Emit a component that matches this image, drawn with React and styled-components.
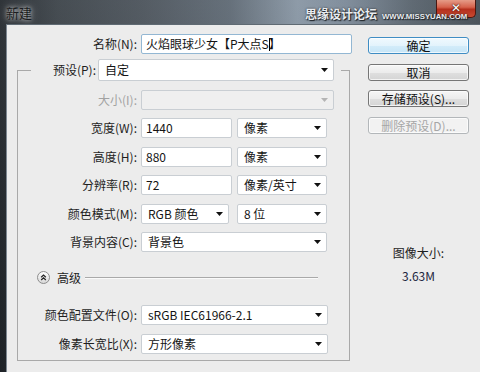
import React from 'react';
import styled, { createGlobalStyle } from 'styled-components';

const FONT = `"Noto Sans CJK SC", "Noto Sans", "Liberation Sans", sans-serif`;

const Global = createGlobalStyle`
  html, body { margin: 0; padding: 0; background: #2a3036; }
  body { width: 480px; height: 372px; overflow: hidden; font-family: ${FONT}; }
  * { box-sizing: border-box; }
`;

const Window = styled.div`
  position: relative;
  width: 480px;
  height: 372px;
  display: flex;
  flex-direction: column;
  background:
    linear-gradient(180deg, rgba(255,255,255,0.06) 0%, rgba(0,0,0,0.15) 100%),
    linear-gradient(90deg, #23282d 0%, #3b4248 12%, #4a525a 30%, #5d6873 48%, #8795a3 62%, #7a8897 72%, #56616b 86%, #414a52 100%);
`;

const TitleBar = styled.div`
  height: 24px;
  flex: 0 0 24px;
  display: flex;
  align-items: flex-start;
  padding: 0 4px 0 6px;
`;

const Title = styled.span`
  margin-top: 5px;
  font-size: 13px;
  line-height: 16px;
  color: #1b1d20;
  text-shadow: 0 0 4px rgba(255,255,255,0.75), 0 0 8px rgba(255,255,255,0.5);
`;

const CloseBtn = styled.span`
  margin-left: auto;
  display: block;
  min-width: 40px;
  width: 40px;
  min-height: 18px;
  height: 18px;
  background-color: #c44530;
  background-image: linear-gradient(180deg, #e59c88 0%, #d6624c 42%, #b5301d 55%, #c84a32 100%);
  border: 1px solid #4a1710;
  border-top-width: 0;
  border-radius: 0 0 5px 5px;
  color: #ffffff;
  font-family: "DejaVu Sans", sans-serif;
  font-size: 12px;
  font-weight: 700;
  line-height: 17px;
  text-align: center;
  text-shadow: 0 0 2px #3a130d, 0 0 1px #3a130d;
`;

const Watermark = styled.div`
  position: absolute;
  left: 305px;
  top: 6px;
  display: flex;
  align-items: baseline;
  gap: 5px;
  color: #e9ecef;
  text-shadow: 0 0 2px #1d2227, 1px 1px 1px #1d2227;
  white-space: nowrap;
`;

const WatermarkCn = styled.span`
  font-size: 12px;
  line-height: 16px;
  font-weight: 700;
`;

const WatermarkUrl = styled.span`
  font-family: "Liberation Sans", Arial, sans-serif;
  font-size: 7.8px;
  font-weight: 700;
`;

const Frame = styled.div`
  flex: 1;
  display: flex;
  padding-left: 6px;
`;

const Body = styled.div`
  flex: 1;
  display: flex;
  background: #ececec;
  border-top: 1px solid #5f6a73;
  border-left: 1px solid #7d8791;
`;

const LeftPanel = styled.div`
  width: 348px;
  padding-top: 9px;
  display: flex;
  flex-direction: column;
`;

const Row = styled.div`
  display: grid;
  grid-template-columns: ${p => p.$labelW}px auto;
  column-gap: 4px;
  align-items: center;
  height: 20px;
  margin-top: ${p => p.$mt ?? 0}px;
`;

const Label = styled.span`
  text-align: right;
  font-size: 12px;
  line-height: 16px;
  color: ${p => (p.$disabled ? '#a2a2a2' : '#1e1e1e')};
  white-space: nowrap;
`;

const Fields = styled.div`
  display: flex;
  gap: ${p => p.$gap ?? 5}px;
  align-items: center;
`;

const Box = styled.div`
  position: relative;
  width: ${p => p.$w}px;
  height: ${p => p.$h ?? 20}px;
  display: flex;
  align-items: center;
  padding-left: ${p => p.$pad ?? 5}px;
  background: ${p => (p.$disabled ? '#efefef' : '#ffffff')};
  border: 1px solid ${p => (p.$focus ? '#93b7d3' : '#c9ced3')};
  border-radius: 2px;
  font-size: 12px;
  line-height: 16px;
  color: #141414;
  white-space: nowrap;
  overflow: hidden;
`;

const ArrowWrap = styled.span`
  position: absolute;
  right: 5px;
  top: 50%;
  margin-top: -2px;
  display: flex;
`;

const Caret = styled.span`
  display: inline-block;
  width: 1px;
  height: 13px;
  background: #000;
  margin: 0 -1px 0 0;
`;

const Arrow = ({ disabled }) => (
  <ArrowWrap>
    <svg width="7" height="4" viewBox="0 0 7 4">
      <path d="M0 0H7L3.5 4Z" fill={disabled ? '#b4b4b4' : '#111'} />
    </svg>
  </ArrowWrap>
);

const Select = ({ w, h, children, disabled }) => (
  <Box $w={w} $h={h} $disabled={disabled} $pad={6}>
    {children}
    <Arrow disabled={disabled} />
  </Box>
);

const Group = styled.fieldset`
  margin: 5px 0 0 10px;
  width: 333px;
  padding: 0 0 6px 0;
  border: 1px solid #a9a9a9;
  display: flex;
  flex-direction: column;
  min-width: 0;
`;

const Legend = styled.legend`
  margin-left: 13px;
  padding: 0 7px 0 0;
  display: grid;
  grid-template-columns: 65px auto;
  column-gap: 2px;
  align-items: center;
`;

const Rows = styled.div`
  padding-top: 9px;
  display: grid;
  row-gap: 8.4px;
`;

const AdvancedRow = styled.div`
  margin-top: 19px;
  height: 14px;
  display: flex;
  align-items: center;
  padding-left: 19px;
`;

const AdvancedText = styled.span`
  margin-left: 7px;
  font-size: 12px;
  line-height: 16px;
  color: #1e1e1e;
`;

const Rule = styled.div`
  flex: 1;
  margin: 0 31px 0 4px;
  height: 2px;
  border-top: 1px solid #a9a9a9;
  border-bottom: 1px solid #fafafa;
`;

const RightPanel = styled.div`
  margin-left: 13px;
  width: 101px;
  padding-top: 12px;
  display: flex;
  flex-direction: column;
  align-items: center;
`;

const Buttons = styled.div`
  display: flex;
  flex-direction: column;
  gap: 9.6px;
`;

const Button = styled.button`
  width: 101px;
  height: 17px;
  padding: 0;
  font-family: ${FONT};
  font-size: 12px;
  line-height: 15px;
  color: ${p => (p.disabled ? '#a6a6a6' : '#111')};
  border: 1px solid ${p => (p.$primary ? '#3f8dc4' : p.disabled ? '#b3b7ba' : '#767676')};
  border-radius: 3px;
  background: ${p =>
    p.$primary
      ? 'linear-gradient(180deg, #f0f9fe 0%, #e3f3fc 50%, #d3ecfa 51%, #c6e5f7 100%)'
      : p.disabled
      ? '#f2f2f2'
      : 'linear-gradient(180deg, #f6f6f6 0%, #ececec 50%, #dfdfdf 51%, #d4d4d4 100%)'};
  box-shadow: inset 0 0 0 1px rgba(255,255,255,0.7);
`;

const InfoLabel = styled.div`
  margin-top: 111px;
  font-size: 12px;
  line-height: 16px;
  color: #1e1e1e;
`;

const InfoValue = styled.div`
  margin-top: 7px;
  font-size: 12px;
  line-height: 16px;
  color: #1d2640;
`;

const ExpandIcon = () => (
  <svg width="13" height="13" viewBox="0 0 13 13">
    <defs>
      <linearGradient id="eg" x1="0" y1="0" x2="0" y2="1">
        <stop offset="0" stopColor="#ffffff" />
        <stop offset="1" stopColor="#d6d6d6" />
      </linearGradient>
    </defs>
    <circle cx="6.5" cy="6.5" r="6" fill="url(#eg)" stroke="#8d8d8d" strokeWidth="1" />
    <path d="M4.2 6.3L6.5 4.1L8.8 6.3M4.2 9L6.5 6.8L8.8 9" fill="none" stroke="#222" strokeWidth="1.2" />
  </svg>
);

export default function App() {
  return (
    <>
      <Global />
      <Window>
        <TitleBar>
          <Title>新建</Title>
          <CloseBtn>✕</CloseBtn>
        </TitleBar>
        <Frame>
          <Body>
            <LeftPanel>
              <Row $labelW={130}>
                <Label>名称(N):</Label>
                <Box $w={211} $focus $pad={4}>
                  火焰眼球少女【P大点S<Caret />】
                </Box>
              </Row>
              <Group>
                <Legend>
                  <Label>预设(P):</Label>
                  <Select w={236} h={22}>自定</Select>
                </Legend>
                <Rows>
                  <Row $labelW={119}>
                    <Label $disabled>大小(I):</Label>
                    <Select w={193} disabled />
                  </Row>
                  <Row $labelW={119}>
                    <Label>宽度(W):</Label>
                    <Fields>
                      <Box $w={91} $pad={4}>1440</Box>
                      <Select w={90}>像素</Select>
                    </Fields>
                  </Row>
                  <Row $labelW={119}>
                    <Label>高度(H):</Label>
                    <Fields>
                      <Box $w={91} $pad={4}>880</Box>
                      <Select w={90}>像素</Select>
                    </Fields>
                  </Row>
                  <Row $labelW={119}>
                    <Label>分辨率(R):</Label>
                    <Fields>
                      <Box $w={91} $pad={4}>72</Box>
                      <Select w={90}>像素/英寸</Select>
                    </Fields>
                  </Row>
                  <Row $labelW={119}>
                    <Label>颜色模式(M):</Label>
                    <Fields $gap={8}>
                      <Select w={88}>RGB 颜色</Select>
                      <Select w={90}>8 位</Select>
                    </Fields>
                  </Row>
                  <Row $labelW={119}>
                    <Label>背景内容(C):</Label>
                    <Select w={186}>背景色</Select>
                  </Row>
                </Rows>
                <AdvancedRow>
                  <ExpandIcon />
                  <AdvancedText>高级</AdvancedText>
                  <Rule />
                </AdvancedRow>
                <Row $labelW={119} $mt={20}>
                  <Label>颜色配置文件(O):</Label>
                  <Select w={187}>sRGB IEC61966-2.1</Select>
                </Row>
                <Row $labelW={119} $mt={9}>
                  <Label>像素长宽比(X):</Label>
                  <Select w={187}>方形像素</Select>
                </Row>
              </Group>
            </LeftPanel>
            <RightPanel>
              <Buttons>
                <Button $primary>确定</Button>
                <Button>取消</Button>
                <Button>存储预设(S)...</Button>
                <Button disabled>删除预设(D)...</Button>
              </Buttons>
              <InfoLabel>图像大小:</InfoLabel>
              <InfoValue>3.63M</InfoValue>
            </RightPanel>
          </Body>
        </Frame>
        <Watermark>
          <WatermarkCn>思缘设计论坛</WatermarkCn>
          <WatermarkUrl>WWW.MISSYUAN.COM</WatermarkUrl>
        </Watermark>
      </Window>
    </>
  );
}
